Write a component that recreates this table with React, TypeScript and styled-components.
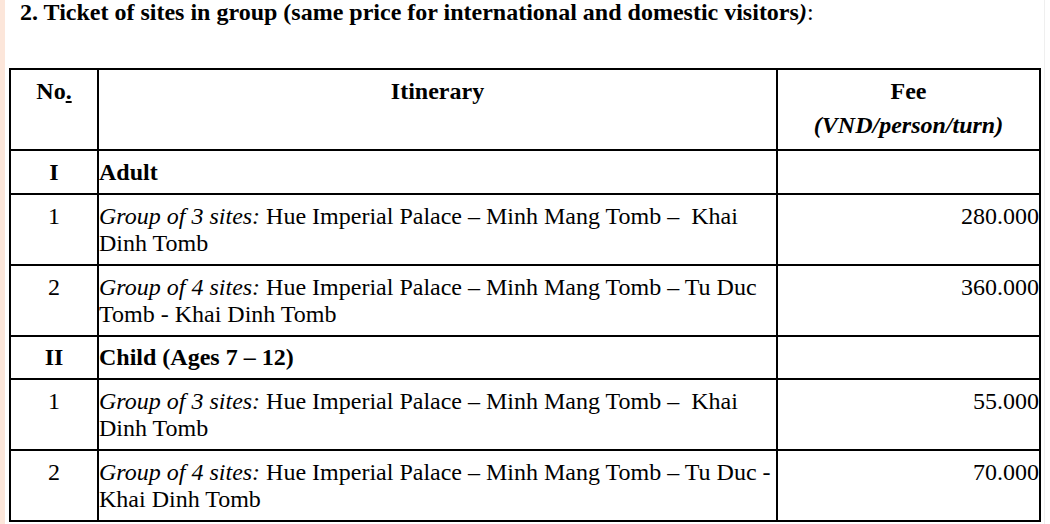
import React from "react";
import styled, { createGlobalStyle } from "styled-components";

const GlobalStyle = createGlobalStyle`
  html, body {
    margin: 0;
    padding: 0;
    background: #fff;
  }
  body {
    font-family: "Liberation Serif", "Times New Roman", serif;
    color: #000;
  }
`;

const Page = styled.div`
  display: flex;
  min-height: 524px;
`;

const Strip = styled.div`
  width: 5px;
  flex: none;
  background: #fce6da;
`;

const Content = styled.div`
  width: 1040px;
  padding-left: 4px;
  box-sizing: border-box;
  border-right: 1px solid #efefef;
`;

const Heading = styled.div`
  font-size: 24px;
  line-height: 25px;
  padding-left: 11px;
  margin-bottom: 43px;
`;

const Table = styled.table`
  border-collapse: collapse;
  table-layout: fixed;
  width: 1032px;
  font-size: 24px;
  line-height: 27px;
`;

const HeadCell = styled.th`
  border: 2px solid #000;
  padding: 8px 0 10px;
  vertical-align: top;
  text-align: center;
  font-weight: bold;
`;

const Unit = styled.i`
  display: block;
  margin-top: 7px;
`;

const Cell = styled.td<{ $align?: "left" | "center" | "right"; $bold?: boolean; $section?: boolean }>`
  border: 2px solid #000;
  padding: ${(p) => (p.$section ? "7.5px 0 7px" : "8px 0 7px")};
  vertical-align: top;
  text-align: ${(p) => p.$align ?? "left"};
  font-weight: ${(p) => (p.$bold ? "bold" : "normal")};
`;

const Dot = styled.span`
  text-decoration: underline;
`;

type Item = { no: string; group: string; sites: React.ReactNode; fee: string };
type Section = { no: string; title: string; items: Item[] };

const sections: Section[] = [
  {
    no: "I",
    title: "Adult",
    items: [
      {
        no: "1",
        group: "Group of 3 sites:",
        sites: <> Hue Imperial Palace – Minh Mang Tomb –&nbsp; Khai Dinh Tomb</>,
        fee: "280.000",
      },
      {
        no: "2",
        group: "Group of 4 sites:",
        sites: " Hue Imperial Palace – Minh Mang Tomb – Tu Duc Tomb - Khai Dinh Tomb",
        fee: "360.000",
      },
    ],
  },
  {
    no: "II",
    title: "Child (Ages 7 – 12)",
    items: [
      {
        no: "1",
        group: "Group of 3 sites:",
        sites: <> Hue Imperial Palace – Minh Mang Tomb –&nbsp; Khai Dinh Tomb</>,
        fee: "55.000",
      },
      {
        no: "2",
        group: "Group of 4 sites:",
        sites: " Hue Imperial Palace – Minh Mang Tomb – Tu Duc - Khai Dinh Tomb",
        fee: "70.000",
      },
    ],
  },
];

export default function App() {
  return (
    <>
      <GlobalStyle />
      <Page>
        <Strip />
        <Content>
          <Heading>
            <b>
              2. Ticket of sites in group (same price for international and domestic visitors
              <i>)</i>
            </b>
            :
          </Heading>
          <Table>
            <colgroup>
              <col style={{ width: 88 }} />
              <col style={{ width: 679 }} />
              <col />
            </colgroup>
            <thead>
              <tr>
                <HeadCell>
                  No<Dot>.</Dot>
                </HeadCell>
                <HeadCell>Itinerary</HeadCell>
                <HeadCell>
                  Fee
                  <Unit>(VND/person/turn)</Unit>
                </HeadCell>
              </tr>
            </thead>
            <tbody>
              {sections.map((s) => (
                <React.Fragment key={s.no}>
                  <tr>
                    <Cell $align="center" $bold $section>
                      {s.no}
                    </Cell>
                    <Cell $bold $section>
                      {s.title}
                    </Cell>
                    <Cell $section />
                  </tr>
                  {s.items.map((it) => (
                    <tr key={it.no}>
                      <Cell $align="center">{it.no}</Cell>
                      <Cell>
                        <i>{it.group}</i>
                        {it.sites}
                      </Cell>
                      <Cell $align="right">{it.fee}</Cell>
                    </tr>
                  ))}
                </React.Fragment>
              ))}
            </tbody>
          </Table>
        </Content>
      </Page>
    </>
  );
}
